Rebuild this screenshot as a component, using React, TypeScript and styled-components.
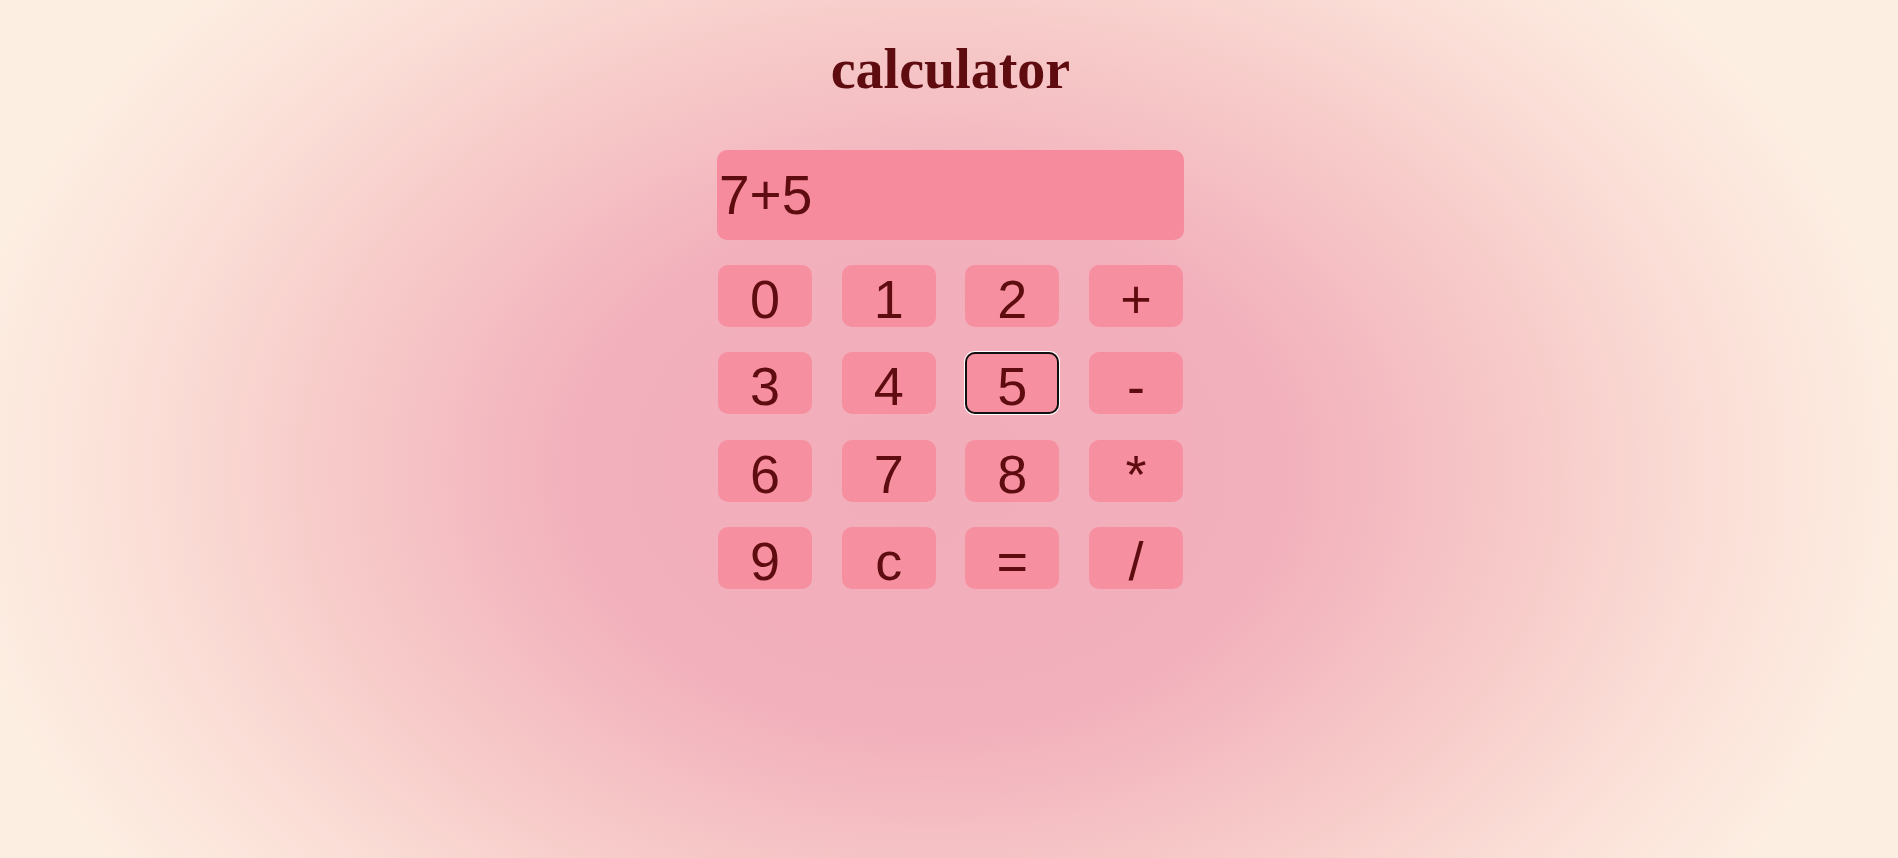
import React, { useState } from "react";
import styled, { createGlobalStyle, css } from "styled-components";

const GlobalStyle = createGlobalStyle`
  html, body {
    margin: 0;
    padding: 0;
    height: 100%;
  }
  body {
    background-color: #fdeee2;
    background-image: radial-gradient(
      ellipse 980px 720px at 930px 470px,
      #f2adba 0%,
      #f2b0bc 36%,
      #f7cbc9 62%,
      #fbe0d8 82%,
      #fdeee2 100%
    );
    background-repeat: no-repeat;
  }
  #root {
    min-height: 100%;
  }
`;

const Page = styled.main`
  display: flex;
  flex-direction: column;
  align-items: center;
  min-height: 858px;
  box-sizing: border-box;
  padding-top: 38px;
`;

const Title = styled.h1`
  margin: 0 0 49px;
  font-family: "Liberation Serif", "Times New Roman", serif;
  font-weight: 700;
  font-size: 56px;
  line-height: 63px;
  color: #5e0c10;
  padding-left: 3px;
`;

const Calculator = styled.section`
  display: flex;
  flex-direction: column;
  gap: 25px;
  width: 467px;
  margin-left: 3px;
`;

const Display = styled.div`
  box-sizing: border-box;
  height: 90px;
  display: flex;
  align-items: center;
  padding: 0 2px;
  border-radius: 10px;
  background: #f68b9e;
  color: #5e0c10;
  font-family: "Liberation Sans", Arial, sans-serif;
  font-size: 55px;
  line-height: 62px;
`;

const Keypad = styled.div`
  display: grid;
  grid-template-columns: repeat(4, 94px);
  grid-auto-rows: 62px;
  justify-content: space-between;
  row-gap: 25.3px;
  padding: 0 1px;
`;

const Key = styled.button<{ $focused?: boolean }>`
  box-sizing: border-box;
  height: 62px;
  padding: 6px 0 0;
  margin: 0;
  border: none;
  border-radius: 10px;
  background: #f68fa0;
  color: #5e0c10;
  font-family: "Liberation Sans", Arial, sans-serif;
  font-size: 54px;
  line-height: 56px;
  cursor: pointer;
  outline: none;
  ${(p) =>
    p.$focused &&
    css`
      box-shadow: inset 0 0 0 2px #101010, 0 0 0 1px #ffffff;
    `}
`;

const KEYS = ["0", "1", "2", "+", "3", "4", "5", "-", "6", "7", "8", "*", "9", "c", "=", "/"];

export default function App() {
  const [expr, setExpr] = useState("7+5");
  const [last, setLast] = useState("5");

  const press = (k: string) => {
    setLast(k);
    if (k === "c") {
      setExpr("");
      return;
    }
    if (k === "=") {
      try {
        if (/^[0-9+\-*/. ]+$/.test(expr)) {
          // eslint-disable-next-line no-new-func
          const r = Function(`"use strict";return (${expr})`)();
          setExpr(String(r));
        }
      } catch {
        setExpr("Error");
      }
      return;
    }
    setExpr((e) => e + k);
  };

  return (
    <>
      <GlobalStyle />
      <Page>
        <Title>calculator</Title>
        <Calculator>
          <Display>{expr}</Display>
          <Keypad>
            {KEYS.map((k) => (
              <Key key={k} $focused={last === k} onClick={() => press(k)}>
                {k}
              </Key>
            ))}
          </Keypad>
        </Calculator>
      </Page>
    </>
  );
}
